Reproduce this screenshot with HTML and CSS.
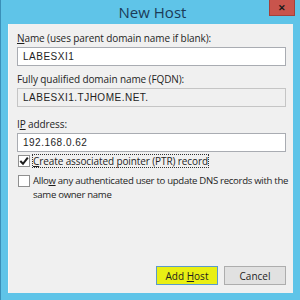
FILE: index.html
```html
<!DOCTYPE html>
<html>
<head>
    <link rel="stylesheet" href="styles.css">
</head>
<body>
    <div class="window">
        <div class="titlebar">
            <span></span>
            <span class="title">New Host</span>
            <span class="close-wrap"><span class="close-btn">&#x2715;</span></span>
        </div>
        <form class="dialog">
            <label class="field-label"><u>N</u>ame (uses parent domain name if blank):</label>
            <div class="textbox">LABESXI1</div>

            <label class="field-label">Fully qualified domain name (FQDN):</label>
            <div class="textbox readonly">LABESXI1.TJHOME.NET.</div>

            <label class="field-label ip-label">I<u>P</u> address:</label>
            <div class="textbox">192.168.0.62</div>

            <div class="check-row first">
                <span class="checkbox checked">
                    <svg width="10" height="10" viewBox="0 0 10 10"><path d="M1.3 5 L4 7.8 L8.8 1.6" fill="none" stroke="#1c1c1c" stroke-width="2"/></svg>
                </span>
                <span class="check-text focused"><u>C</u>reate associated pointer (PTR) record</span>
            </div>
            <div class="check-row">
                <span class="checkbox"></span>
                <span class="check-text narrow">Allo<u>w</u> any authenticated user to update DNS records with the<br>same owner name</span>
            </div>

            <div class="buttons">
                <button type="button" class="btn btn-default">Add <u>H</u>ost</button>
                <button type="button" class="btn">Cancel</button>
            </div>
        </form>
    </div>
</body>
</html>
```

FILE: styles.css
```css
/* Page */
body {
    margin: 0;
    padding: 0;
    font-family: 'Open Sans', 'Noto Sans', sans-serif;
    color: #1e1e1e;
}

/* Window frame */
.window {
    width: 300px;
    height: 300px;
    box-sizing: border-box;
    background-color: #5fc4e8;
    border-left: 1px solid #3a8fb8;
    display: flex;
    flex-direction: column;
}

.titlebar {
    height: 24px;
    display: grid;
    grid-template-columns: 1fr auto 1fr;
    align-items: start;
}

.title {
    font-size: 15px;
    line-height: 24px;
    color: #1b3b58;
    padding-left: 4px;
}

.close-wrap {
    display: flex;
    justify-content: flex-end;
    padding-right: 5px;
}

.close-btn {
    width: 26px;
    height: 16px;
    box-sizing: border-box;
    background-color: #c9544c;
    border: 1px solid #a3413b;
    border-top: none;
    color: #1a1a1a;
    font-size: 9px;
    font-weight: bold;
    text-align: center;
    line-height: 15px;
}

/* Dialog body */
.dialog {
    flex: 1;
    margin: 0 7px 7px 7px;
    background-color: #f0f0f0;
    border-left: 1px solid #f8f8f8;
    padding: 7px 7px 8px 8px;
    display: flex;
    flex-direction: column;
    font-size: 10px;
}

.field-label {
    line-height: 14px;
    margin-bottom: 2px;
    letter-spacing: -0.1px;
}

.field-label.ip-label {
    margin-top: 4px;
}

.textbox {
    height: 19px;
    box-sizing: border-box;
    border: 1px solid #a9acb2;
    background-color: #ffffff;
    padding-left: 5px;
    font-family: 'Liberation Sans', sans-serif;
    font-size: 10px;
    line-height: 17px;
    letter-spacing: 0.5px;
    margin-bottom: 6px;
}

.textbox.readonly {
    background-color: #f0f0f0;
    border-color: #c5c5c5;
}

/* Checkboxes */
.check-row {
    display: flex;
    align-items: flex-start;
    gap: 2px;
    line-height: 14px;
    padding-left: 1px;
}

.check-row.first {
    margin-top: -4px;
    margin-bottom: 6px;
}

.checkbox {
    width: 12px;
    height: 12px;
    box-sizing: border-box;
    border: 1px solid #8f8f8f;
    background-color: #ffffff;
    margin-top: 1px;
    display: flex;
    align-items: center;
    justify-content: center;
    flex-shrink: 0;
}

.check-text {
    padding: 0 1px;
    letter-spacing: -0.1px;
}

.check-text.narrow {
    font-size: 9.6px;
    letter-spacing: -0.3px;
    white-space: nowrap;
}

.check-text.focused {
    outline: 1px dotted #333;
    outline-offset: -1px;
}

/* Buttons */
.buttons {
    margin-top: auto;
    display: flex;
    justify-content: flex-end;
    gap: 6px;
}

.btn {
    width: 62px;
    height: 19px;
    padding: 0;
    font-family: 'Open Sans', 'Noto Sans', sans-serif;
    font-size: 10px;
    color: #1e1e1e;
    background-color: #e1e1e1;
    border: 1px solid #adadad;
}

.btn-default {
    background-color: #e9ef14;
    border-color: #5c9bc9;
}
```
